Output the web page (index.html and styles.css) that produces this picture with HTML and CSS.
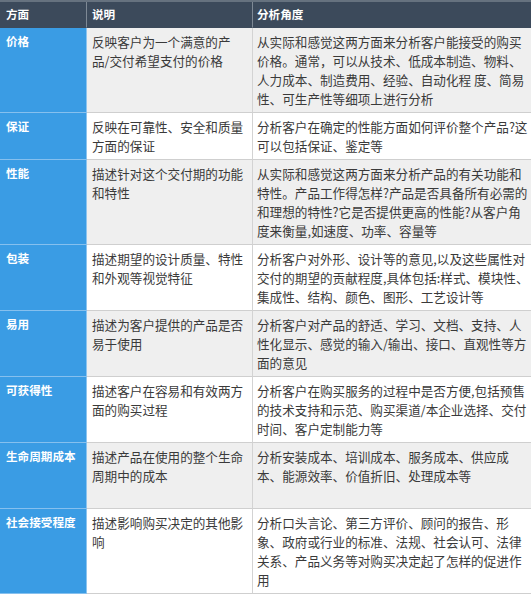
FILE: index.html
```html
<!DOCTYPE html>
<html lang="zh">
<head>
<meta charset="utf-8">
<title>方面 说明 分析角度</title>
<link rel="stylesheet" href="styles.css">
</head>
<body>
<div class="table">
  <div class="row head">
    <div class="c1">方面</div>
    <div class="c2">说明</div>
    <div class="c3">分析角度</div>
  </div>
  <div class="row gray">
    <div class="c1">价格</div>
    <div class="c2">反映客户为一个满意的产<br>品/交付希望支付的价格</div>
    <div class="c3">从实际和感觉这两方面来分析客户能接受的购买<br>价格。通常，可以从技术、低成本制造、物料、<br>人力成本、制造费用、经验、自动化程 度、简易<br>性、可生产性等细项上进行分析</div>
  </div>
  <div class="row">
    <div class="c1">保证</div>
    <div class="c2">反映在可靠性、安全和质量<br>方面的保证</div>
    <div class="c3">分析客户在确定的性能方面如何评价整个产品?这<br>可以包括保证、鉴定等</div>
  </div>
  <div class="row gray">
    <div class="c1">性能</div>
    <div class="c2">描述针对这个交付期的功能<br>和特性</div>
    <div class="c3">从实际和感觉这两方面来分析产品的有关功能和<br>特性。产品工作得怎样?产品是否具备所有必需的<br>和理想的特性?它是否提供更高的性能?从客户角<br>度来衡量,如速度、功率、容量等</div>
  </div>
  <div class="row">
    <div class="c1">包装</div>
    <div class="c2">描述期望的设计质量、特性<br>和外观等视觉特征</div>
    <div class="c3">分析客户对外形、设计等的意见,以及这些属性对<br>交付的期望的贡献程度,具体包括:样式、模块性、<br>集成性、结构、颜色、图形、工艺设计等</div>
  </div>
  <div class="row gray">
    <div class="c1">易用</div>
    <div class="c2">描述为客户提供的产品是否<br>易于使用</div>
    <div class="c3">分析客户对产品的舒适、学习、文档、支持、人<br>性化显示、感觉的输入/输出、接口、直观性等方<br>面的意见</div>
  </div>
  <div class="row">
    <div class="c1">可获得性</div>
    <div class="c2">描述客户在容易和有效两方<br>面的购买过程</div>
    <div class="c3">分析客户在购买服务的过程中是否方便,包括预售<br>的技术支持和示范、购买渠道/本企业选择、交付<br>时间、客户定制能力等</div>
  </div>
  <div class="row gray lines3">
    <div class="c1">生命周期成本</div>
    <div class="c2">描述产品在使用的整个生命<br>周期中的成本</div>
    <div class="c3">分析安装成本、培训成本、服务成本、供应成<br>本、能源效率、价值折旧、处理成本等</div>
  </div>
  <div class="row">
    <div class="c1">社会接受程度</div>
    <div class="c2">描述影响购买决定的其他影<br>响</div>
    <div class="c3">分析口头言论、第三方评价、顾问的报告、形<br>象、政府或行业的标准、法规、社会认可、法律<br>关系、产品义务等对购买决定起了怎样的促进作<br>用</div>
  </div>
</div>
</body>
</html>
```

FILE: styles.css
```css
html, body {
  margin: 0;
  padding: 0;
  background: #ffffff;
}

body {
  width: 531px;
  height: 594px;
  overflow: hidden;
  font-family: "Noto Sans CJK SC", "Noto Sans", sans-serif;
  color: #3a3a3a;
}

.table {
  display: flex;
  flex-direction: column;
  width: 531px;
}

.row {
  display: grid;
  grid-template-columns: 87px 166px 278px;
  background: #ffffff;
}

.row.gray {
  background: #efefef;
}

.row > div {
  white-space: nowrap;
  font-size: 12.6px;
  line-height: 19px;
  padding: 4px 0 4px 5px;
  border-bottom: 1px solid #cfcfcf;
}

.row > .c1 {
  background: #3a9ce4;
  color: #ffffff;
  font-weight: 700;
  font-size: 11.6px;
  padding-left: 6px;
  border-right: 1px solid #8cc4ef;
  border-bottom-color: #86c0ee;
}

.row > .c2 {
  border-right: 1px solid #d3d3d3;
}

.row > .c3 {
  padding-left: 4px;
}

.row.lines3 > div {
  min-height: 57px;
}

.row.head {
  background: #3c4a5b;
  border-top: 2px solid #66727f;
}

.row.head > div {
  background: #3c4a5b;
  color: #ffffff;
  font-weight: 700;
  font-size: 11.6px;
  line-height: 18px;
  padding-top: 3px;
  padding-bottom: 4px;
  border-bottom: 1px solid #3c4a5b;
}

.row.head > .c1,
.row.head > .c2 {
  border-right: 1px solid #7e8995;
}
```
